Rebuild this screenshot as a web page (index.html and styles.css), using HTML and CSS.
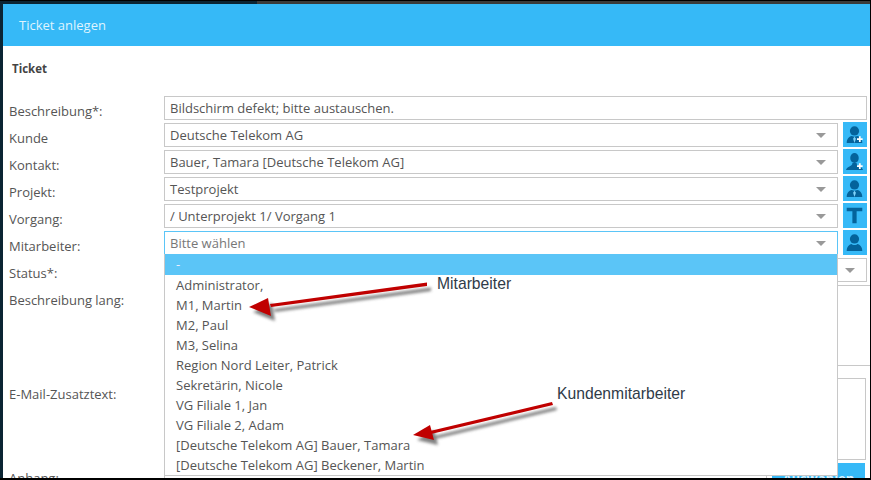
FILE: index.html
```html
<!DOCTYPE html>
<html lang="de">
<head>
<meta charset="utf-8">
<title>Ticket anlegen</title>
<link rel="stylesheet" href="styles.css">
</head>
<body>
<div class="dialog">
  <header class="head">Ticket anlegen</header>
  <h2 class="section">Ticket</h2>
  <form class="form">
    <div class="row"><label>Beschreibung*:</label><div class="field full">Bildschirm defekt; bitte austauschen.</div></div>
    <div class="row"><label>Kunde</label><div class="field">Deutsche Telekom AG<i class="caret"></i></div>
      <span class="btn"><svg viewBox="0 0 24 24"><use href="#suit"/><path d="M15.500 18.500h8M19.500 14.500v8" stroke="#fff" stroke-width="2.500"/></svg></span></div>
    <div class="row"><label>Kontakt:</label><div class="field">Bauer, Tamara [Deutsche Telekom AG]<i class="caret"></i></div>
      <span class="btn"><svg viewBox="0 0 24 24"><use href="#person"/><path d="M15.500 18.500h8M19.500 14.500v8" stroke="#fff" stroke-width="2.500"/></svg></span></div>
    <div class="row"><label>Projekt:</label><div class="field">Testprojekt<i class="caret"></i></div>
      <span class="btn"><svg viewBox="0 0 24 24"><use href="#suit"/></svg></span></div>
    <div class="row"><label>Vorgang:</label><div class="field">/ Unterprojekt 1/ Vorgang 1<i class="caret"></i></div>
      <span class="btn"><svg viewBox="0 0 24 24"><path d="M1 1h22v5h-8v17H9V6H1z" fill="#04639b"/></svg></span></div>
    <div class="row"><label>Mitarbeiter:</label><div class="field active">Bitte wählen<i class="caret"></i>
        <ul class="menu">
          <li class="sel">-</li>
          <li>Administrator,</li>
          <li>M1, Martin</li>
          <li>M2, Paul</li>
          <li>M3, Selina</li>
          <li>Region Nord Leiter, Patrick</li>
          <li>Sekretärin, Nicole</li>
          <li>VG Filiale 1, Jan</li>
          <li>VG Filiale 2, Adam</li>
          <li>[Deutsche Telekom AG] Bauer, Tamara</li>
          <li>[Deutsche Telekom AG] Beckener, Martin</li>
        </ul></div>
      <span class="btn"><svg viewBox="0 0 24 24"><use href="#plain"/></svg></span></div>
    <div class="row"><label>Status*:</label><div class="field full"><i class="caret"></i></div></div>
    <div class="row tall-a"><label>Beschreibung lang:</label><div class="editor"></div></div>
    <div class="row tall-b"><label>E-Mail-Zusatztext:</label><div class="field area"></div></div>
    <div class="row last"><label>Anhang:</label><div class="field attach"></div><span class="upload">Auswählen</span></div>
  </form>
  <svg class="arrows" viewBox="0 0 871 480">
    <defs>
      <filter id="sh" x="-20%" y="-50%" width="140%" height="220%"><feGaussianBlur stdDeviation="1.8"/></filter>
    </defs>
    <g fill="#555" opacity=".75" filter="url(#sh)" transform="translate(4 5)">
      <path d="M427 282.500 270 304l1 3 156-21z"/><path d="M249 307l19-9 3 18z"/>
      <path d="M552 402 430 431l1 3 122-29z"/><path d="M413 435l17-10 4 15z"/>
    </g>
    <g fill="#c00000">
      <path d="M427 282.500 270 304l1 3 156-21z"/><path d="M249 307l19-9 3 18z"/>
      <path d="M552 402 430 431l1 3 122-29z"/><path d="M413 435l17-10 4 15z"/>
    </g>
  </svg>
  <span class="note n1">Mitarbeiter</span>
  <span class="note n2">Kundenmitarbeiter</span>
</div>
<svg class="defs" width="0" height="0">
  <defs>
    <g id="plain" fill="#04639b"><circle cx="12" cy="7" r="6.500"/><path d="M1 24c0-6 3-9 7-10 1 2 7 2 8 0 4 1 7 4 7 10z"/></g>
    <g id="suit" fill="#04639b"><circle cx="12" cy="7" r="6.500"/><path d="M1 24c0-6 3-9 7-10l4 1 4-1c4 1 7 4 7 10z"/><path d="M12 15l2 3-2 6-2-6z" fill="#7fd3fa"/></g>
    <g id="person" fill="#04639b"><ellipse cx="12" cy="7" rx="6" ry="7"/><path d="M0 24c1-4 6-5 8-7 1-1 1-2 1-3h6c0 1 0 2 1 3 2 2 7 3 8 7z"/></g>
  </defs>
</svg>
</body>
</html>
```
FILE: styles.css
```css
* { box-sizing: border-box; }
html, body { margin: 0; height: 480px; overflow: hidden; }
body { background: linear-gradient(90deg, #0b2433 257px, #3a3a3a 257px); border-top: 1px solid #000; border-right: 1px solid #000; border-bottom: 2px solid #000; padding: 3px 0 0 3px; font-family: "Open Sans", "Noto Sans", sans-serif; font-size: 13px; color: #555; }
.dialog { position: relative; width: 867px; height: 474px; background: #fff; overflow: hidden; }
.head { height: 42px; background: #36b9f7; color: #dff4fe; font-size: 13px; line-height: 42px; padding-left: 16px; }
.section { margin: 0; padding: 14px 0 0 9px; height: 50px; font-size: 11.5px; font-weight: 700; line-height: 17px; color: #444; }
.form { display: flex; flex-direction: column; gap: 3px; }
.row { display: flex; height: 24px; gap: 5px; padding-left: 6px; }
label { width: 150px; flex: none; line-height: 30px; white-space: nowrap; color: #555; }
.field { position: relative; width: 674px; height: 24px; border: 1px solid #c8c8c8; padding: 0 5px; line-height: 22px; white-space: nowrap; color: #555; }
.field.full { width: 703px; }
.field.active { border-color: #5bc5f7; color: #777; }
.caret { position: absolute; right: 11px; top: 9px; width: 0; height: 0; border: 5px solid transparent; border-top: 5px solid #999; border-bottom: 0; }
.btn { width: 24px; height: 25px; flex: none; margin-top: -1px; background: #36b9f7; padding: 4px 3px; }
.btn svg { display: block; width: 17px; height: 17px; }
.menu { position: absolute; z-index: 2; left: -1px; top: 22px; width: 674px; margin: 0; padding: 0; list-style: none; background: #fff; border: 1px solid #c8c8c8; border-top: 0; height: 222px; color: #555; }
.menu li { height: 20px; line-height: 20px; padding-left: 11px; }
.menu .sel { height: 21px; background: #5bc5f7; color: #eef; }
.tall-a { height: 81px; }
.editor { width: 706px; height: 81px; border: solid #c8c8c8; border-width: 1px 0; }
.tall-b { height: 81px; margin-top: 9px; }
.tall-b label { line-height: 32px; }
.area { width: 702px; height: 82px; }
.last { height: 30px; margin-top: 1px; }
.attach { width: 603px; height: 30px; }
.upload { width: 93px; height: 30px; background: #36b9f7; color: #dff4fe; text-align: center; font-weight: 700; line-height: 30px; }
.arrows { position: absolute; z-index: 3; left: -3px; top: -4px; width: 871px; height: 480px; pointer-events: none; }
.note { position: absolute; z-index: 4; font-family: "Liberation Sans", Arial, sans-serif; font-size: 15.7px; color: #2f3b48; line-height: 18px; }
.n1 { left: 434px; top: 271px; }
.n2 { left: 554px; top: 381px; }
.defs { position: absolute; }
```
